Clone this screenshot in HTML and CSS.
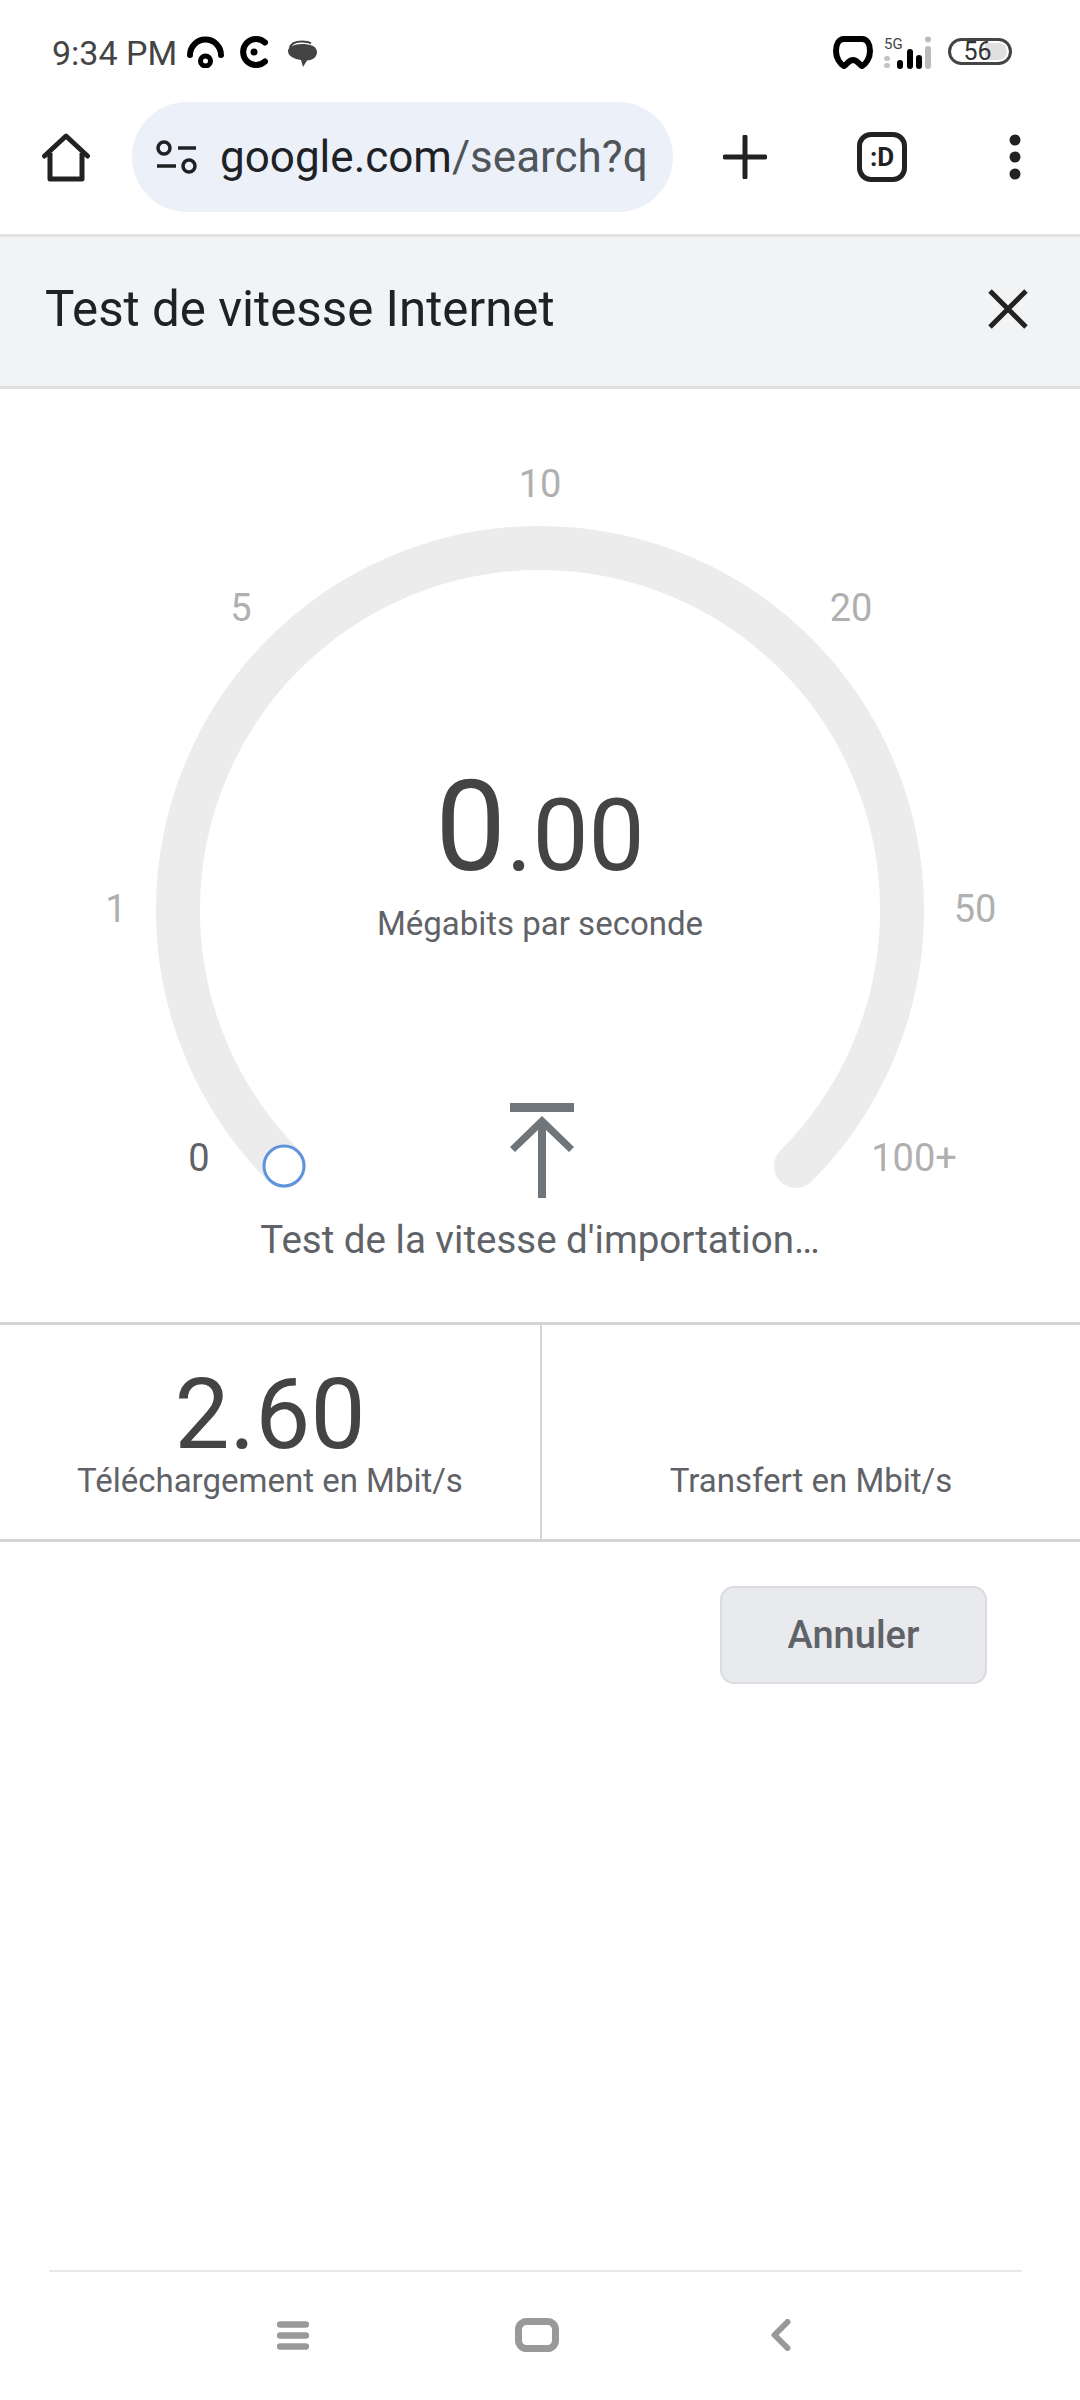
FILE: index.html
```html
<!DOCTYPE html>
<html lang="fr">
<head>
    <meta charset="UTF-8">
    <meta name="viewport" content="width=device-width, initial-scale=1.0">
    <title>Test de vitesse Internet</title>
    <link rel="stylesheet" href="styles.css">
</head>
<body>
    <div class="status-bar">
        <div class="status-left">
            <span class="status-time">9:34 PM</span>
            <svg class="status-icon icon-arc" width="37" height="32" viewBox="0 0 37 32">
                <path d="M3 19A15.500 15.500 0 0 1 34 19" fill="none" stroke="#000" stroke-width="6" stroke-linecap="round"/>
                <circle cx="18.500" cy="25" r="5" fill="none" stroke="#000" stroke-width="5"/>
            </svg>
            <svg class="status-icon icon-c" width="31" height="32" viewBox="0 0 31 32">
                <path d="M27 6.500A13 13 0 1 0 27 25.500" fill="none" stroke="#000" stroke-width="6" stroke-linecap="round"/>
                <circle cx="16" cy="16" r="3.500" fill="#000"/>
            </svg>
            <svg class="status-icon icon-chat" width="29" height="28" viewBox="0 0 29 28">
                <path d="M2 8C3 3 8 1.500 14 1.500C18 1.500 21 2 23 3.500" fill="none" stroke="#444" stroke-width="2"/>
                <path d="M14 4C22 4 29 6 29 12C29 17 25 20 19 20.500L15 27L13 20C6 19 0 16 0 11C0 7 6 4 14 4Z" fill="#444"/>
            </svg>
        </div>
        <div class="status-right">
            <svg class="status-icon" width="40" height="34" viewBox="0 0 40 34">
                <path d="M11 3H29C34 3 37 8 37 15C37 22 33 28 29 30C26 28 24 24 20 24C16 24 14 28 11 30C7 28 3 22 3 15C3 8 6 3 11 3Z" fill="none" stroke="#000" stroke-width="6" stroke-linejoin="round"/>
            </svg>
            <svg class="status-icon" width="48" height="34" viewBox="0 0 48 34">
                <text class="signal-label" x="0" y="13">5G</text>
                <rect x="0" y="20" width="6" height="5" rx="2.500" fill="#c4c4c4"/>
                <rect x="0" y="27" width="6" height="5" rx="2.500" fill="#c4c4c4"/>
                <rect x="13" y="24" width="6" height="9" rx="3" fill="#000"/>
                <rect x="23" y="13" width="6" height="20" rx="3" fill="#000"/>
                <rect x="32" y="19" width="6" height="14" rx="3" fill="#000"/>
                <circle cx="44" cy="3.500" r="3" fill="#bbb"/>
                <rect x="41" y="10" width="6" height="23" rx="3" fill="#bbb"/>
            </svg>
            <div class="battery">56</div>
        </div>
    </div>

    <div class="toolbar">
        <svg class="tool-home" width="50" height="50" viewBox="0 0 50 50">
            <path d="M9 21V47H41V21" fill="none" stroke="#222" stroke-width="5" stroke-linejoin="round"/>
            <path d="M3.500 24L25 4L46.500 24" fill="none" stroke="#222" stroke-width="5" stroke-linejoin="round" stroke-linecap="round"/>
        </svg>
        <div class="url-pill">
            <svg class="url-icon" width="42" height="36" viewBox="0 0 42 36">
                <circle cx="8" cy="9" r="6" fill="none" stroke="#202124" stroke-width="3.500"/>
                <circle cx="33" cy="27" r="6" fill="none" stroke="#202124" stroke-width="3.500"/>
                <path d="M22 9H40M1 27H20" stroke="#202124" stroke-width="3.500"/>
            </svg>
            <span class="url-text">google.com<span class="url-path">/search?q</span></span>
        </div>
        <svg class="tool-plus" width="44" height="44" viewBox="0 0 44 44">
            <path d="M22 2V42M2 22H42" stroke="#222" stroke-width="5" stroke-linecap="round"/>
        </svg>
        <div class="tool-tabs">:D</div>
        <svg class="tool-menu" width="12" height="46" viewBox="0 0 12 46">
            <circle cx="6" cy="6" r="5.500" fill="#222"/>
            <circle cx="6" cy="23" r="5.500" fill="#222"/>
            <circle cx="6" cy="40" r="5.500" fill="#222"/>
        </svg>
    </div>

    <div class="sheet-header">
        <span class="sheet-title">Test de vitesse Internet</span>
        <svg width="40" height="40" viewBox="0 0 40 40">
            <path d="M2 2L38 38M38 2L2 38" stroke="#222" stroke-width="5"/>
        </svg>
    </div>

    <main class="content">
        <section class="gauge">
            <svg class="gauge-arc" width="1080" height="933" viewBox="0 0 1080 933">
                <path d="M284 777A362 362 0 1 1 796 777" fill="none" stroke="#ececec" stroke-width="44" stroke-linecap="round"/>
                <circle cx="284" cy="777" r="20" fill="#fff" stroke="#5f93de" stroke-width="3"/>
            </svg>
            <span class="tick tick-0">0</span>
            <span class="tick tick-1">1</span>
            <span class="tick tick-5">5</span>
            <span class="tick tick-10">10</span>
            <span class="tick tick-20">20</span>
            <span class="tick tick-50">50</span>
            <span class="tick tick-100">100+</span>

            <div class="speed"><span class="speed-int">0</span><span class="speed-dec">.00</span></div>
            <div class="speed-unit">Mégabits par seconde</div>
            <svg class="upload-icon" width="64" height="96" viewBox="0 0 64 96">
                <path d="M0 0H64V9H0ZM28 95V27L5 49L0 44L32 13L64 44L59 49L36 27V95Z" fill="#70757a"/>
            </svg>
            <div class="test-status">Test de la vitesse d'importation…</div>
        </section>

        <section class="results">
            <div class="result">
                <div class="result-value">2.60</div>
                <div class="result-label">Téléchargement en Mbit/s</div>
            </div>
            <div class="result result-right">
                <div class="result-value"></div>
                <div class="result-label">Transfert en Mbit/s</div>
            </div>
        </section>

        <div class="actions">
            <button class="cancel-btn">Annuler</button>
        </div>
    </main>

    <nav class="nav-bar">
        <svg class="nav-menu" width="32" height="29" viewBox="0 0 32 29">
            <path d="M3 3.500H29M3 14.500H29M3 25.500H29" stroke="#999" stroke-width="6.500" stroke-linecap="round"/>
        </svg>
        <svg class="nav-home" width="44" height="34" viewBox="0 0 44 34">
            <rect x="3.500" y="3.500" width="37" height="27" rx="8" fill="none" stroke="#999" stroke-width="7"/>
        </svg>
        <svg width="20" height="32" viewBox="0 0 20 32">
            <path d="M16.500 3L3.500 16L16.500 29" fill="none" stroke="#999" stroke-width="6" stroke-linecap="round" stroke-linejoin="round"/>
        </svg>
    </nav>
</body>
</html>
```

FILE: styles.css
```css
* {
    box-sizing: border-box;
}

body {
    margin: 0;
    width: 1080px;
    height: 2400px;
    display: flex;
    flex-direction: column;
    background: #fff;
    color: #5f6368;
    font-family: Roboto, sans-serif;
    overflow: hidden;
}

/* status bar */
.status-bar {
    height: 100px;
    padding: 36px 68px 0 52px;
    display: flex;
    justify-content: space-between;
    align-items: flex-start;
    flex-shrink: 0;
}

.status-left,
.status-right {
    display: flex;
    align-items: flex-start;
}

.status-time {
    font-size: 34px;
    line-height: 34px;
    color: #444;
    margin-right: 10px;
}

.status-icon {
    display: block;
}

.icon-c {
    margin-left: 14px;
}

.icon-chat {
    margin: 4px 0 0 19px;
}

.status-right {
    gap: 11px;
}

.signal-label {
    font-size: 15px;
    fill: #444;
}

.battery {
    position: relative;
    width: 64px;
    height: 27px;
    margin: 2px 0 0 5px;
    padding-right: 5px;
    border: 3px solid #444;
    border-radius: 14px;
    display: flex;
    align-items: center;
    justify-content: center;
    font-size: 25px;
    color: #333;
}

.battery::before {
    content: "";
    position: absolute;
    top: 2px;
    right: 2px;
    bottom: 2px;
    width: 22px;
    border-radius: 0 9px 9px 0;
    background: #e0e0e0;
    z-index: -1;
}

/* browser toolbar */
.toolbar {
    height: 137px;
    padding: 0 0 20px 41px;
    display: flex;
    align-items: center;
    border-bottom: 3px solid #e3e3e3;
    flex-shrink: 0;
}

.tool-home {
    margin-right: 41px;
}

.url-pill {
    width: 541px;
    height: 110px;
    padding-left: 24px;
    border-radius: 55px;
    background: #ebf0f9;
    display: flex;
    align-items: center;
    gap: 22px;
    overflow: hidden;
}

.url-text {
    font-size: 44px;
    color: #202124;
    white-space: nowrap;
}

.url-path {
    color: #50555a;
}

.tool-plus {
    margin-left: 50px;
}

.tool-tabs {
    width: 50px;
    height: 50px;
    margin-left: 90px;
    border: 5px solid #222;
    border-radius: 14px;
    display: flex;
    align-items: center;
    justify-content: center;
    font-size: 26px;
    font-weight: 700;
    color: #222;
}

.tool-menu {
    margin-left: 102px;
}

/* sheet header */
.sheet-header {
    height: 152px;
    padding: 0 52px 6px 45px;
    display: flex;
    align-items: center;
    justify-content: space-between;
    background: #f1f3f5;
    border-bottom: 3px solid #e0e0e0;
    flex-shrink: 0;
}

.sheet-title {
    font-size: 49.300px;
    color: #202124;
}

.content {
    flex: 1;
    display: flex;
    flex-direction: column;
}

/* speed gauge */
.gauge {
    position: relative;
    height: 933px;
    padding-top: 368px;
    display: flex;
    flex-direction: column;
    align-items: center;
}

.gauge-arc {
    position: absolute;
    top: 0;
    left: 0;
}

.gauge > :not(.gauge-arc):not(.tick) {
    position: relative;
}

.tick {
    position: absolute;
    transform: translate(-50%, -50%);
    font-size: 38px;
    color: #b0b0b0;
}

.tick-0 { left: 199px; top: 769px; color: #5f6368; }
.tick-1 { left: 116px; top: 520px; }
.tick-5 { left: 241px; top: 219px; }
.tick-10 { left: 540px; top: 95px; }
.tick-20 { left: 851px; top: 219px; }
.tick-50 { left: 975px; top: 520px; }
.tick-100 { left: 914px; top: 769px; }

.speed {
    color: #444;
    line-height: 140px;
    height: 140px;
}

.speed-int {
    font-size: 126px;
}

.speed-dec {
    font-size: 100px;
}

.speed-unit {
    font-size: 33px;
    line-height: 40px;
    margin-top: 7px;
}

.upload-icon {
    margin: 159px 0 0 4px;
    flex-shrink: 0;
}

.test-status {
    font-size: 38.500px;
    line-height: 46px;
    margin-top: 18px;
}

/* download / upload results */
.results {
    height: 220px;
    display: flex;
    border-top: 3px solid #d4d4d4;
    border-bottom: 3px solid #d4d4d4;
}

.result {
    width: 50%;
    padding-top: 46px;
    display: flex;
    flex-direction: column;
    align-items: center;
}

.result-right {
    border-left: 2px solid #d4d4d4;
}

.result-value {
    height: 88px;
    font-size: 98px;
    line-height: 88px;
    color: #444;
}

.result-label {
    font-size: 33px;
    line-height: 40px;
    margin-top: 2px;
}

.actions {
    padding: 44px 93px 0 0;
    display: flex;
    justify-content: flex-end;
}

.cancel-btn {
    width: 267px;
    height: 98px;
    padding: 0;
    background: #e8eaed;
    border: 2px solid #dadce0;
    border-radius: 14px;
    color: #5f6368;
    font-family: inherit;
    font-size: 38px;
    font-weight: 500;
}

/* android nav bar */
.nav-bar {
    height: 130px;
    margin: 0 58px 0 49px;
    padding: 0 231px 2px 228px;
    display: flex;
    justify-content: space-between;
    align-items: center;
    border-top: 2px solid #e8e8e8;
    flex-shrink: 0;
}

.nav-home {
    margin-left: -6px;
}
```
